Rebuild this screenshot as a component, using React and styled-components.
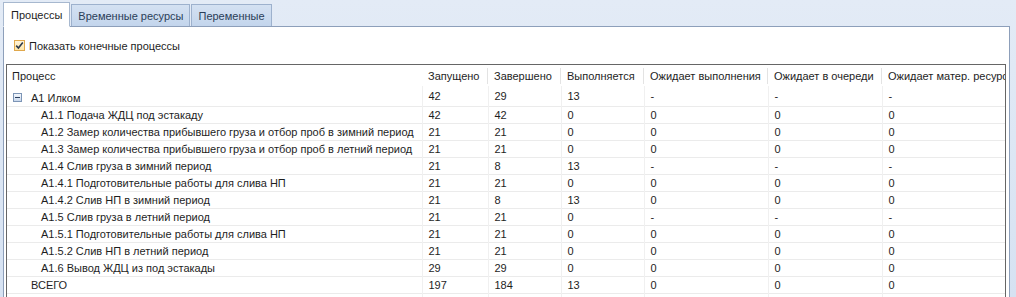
import React from "react";
import styled, { createGlobalStyle } from "styled-components";

const GlobalStyle = createGlobalStyle`
  html, body {
    margin: 0;
    padding: 0;
    background: #dbe6f4;
  }
  body {
    font-family: "Liberation Sans", Arial, sans-serif;
    font-size: 11px;
    color: #1e1e1e;
  }
`;

const Frame = styled.div`
  width: 1016px;
  height: 297px;
  overflow: hidden;
  background: linear-gradient(#e3ebf6, #d6e2f2);
  padding: 2px 6px 0 3px;
  box-sizing: border-box;
  display: flex;
  flex-direction: column;
`;

const TabStrip = styled.div`
  display: flex;
  align-items: flex-end;
  height: 24px;
  position: relative;
  z-index: 1;
`;

const Tab = styled.div`
  box-sizing: border-box;
  height: ${(p) => (p.$active ? "25px" : "22px")};
  padding: 0 ${(p) => (p.$active ? "7px" : "6px")};
  margin-right: 1px;
  display: flex;
  align-items: center;
  border: 1px solid ${(p) => (p.$active ? "#a7b8cf" : "#9db1cd")};
  border-bottom: ${(p) => (p.$active ? "1px solid #fff" : "none")};
  background: ${(p) =>
    p.$active ? "#fff" : "linear-gradient(#d4e1f2, #c3d5ec)"};
  color: ${(p) => (p.$active ? "#1e1e1e" : "#2a3d58")};
  margin-bottom: ${(p) => (p.$active ? "-1px" : "0")};
`;

const Panel = styled.div`
  flex: 1;
  background: #fff;
  border: 1px solid #8d9fba;
  border-bottom: none;
  padding: 0 3px 0 2px;
  display: flex;
  flex-direction: column;
  min-height: 0;
`;

const CheckRow = styled.label`
  display: flex;
  align-items: center;
  gap: 4px;
  height: 37px;
  padding-left: 8px;
`;

const Check = styled.span`
  width: 11px;
  height: 11px;
  box-sizing: border-box;
  border: 1px solid #e0a84c;
  background: linear-gradient(#fff4d8, #ffe6a8);
  display: flex;
  align-items: center;
  justify-content: center;
`;

const Grid = styled.div`
  flex: 1;
  border: 1px solid #666;
  border-bottom: none;
  overflow: hidden;
  min-height: 0;
`;

const Table = styled.table`
  border-collapse: collapse;
  table-layout: fixed;
  width: 1130px;
  font-size: 11px;
`;

const HeadCell = styled.th`
  font-weight: normal;
  text-align: left;
  height: 21px;
  padding: 0 0 0 ${(p) => (p.$first ? "5px" : "6px")};
  white-space: nowrap;
  overflow: hidden;
  position: relative;
  &::after {
    content: "";
    position: absolute;
    right: 0;
    top: 3px;
    bottom: 2px;
    width: 1px;
    background: ${(p) => (p.$first ? "transparent" : "#e3e3e3")};
  }
`;

const Row = styled.tr`
  height: 17px;
  border-top: ${(p) => (p.$first ? "none" : "1px solid #ebebeb")};
`;

const Cell = styled.td`
  padding: 0 0 0 6px;
  white-space: nowrap;
  overflow: hidden;
  border-left: 1px solid #f0f0f0;
  line-height: 16px;
`;

const NameCell = styled.td`
  padding: 0 0 0 ${(p) => p.$indent}px;
  white-space: nowrap;
  overflow: hidden;
  line-height: 16px;
`;

const NameWrap = styled.span`
  display: inline-flex;
  align-items: center;
`;

const Expander = styled.span`
  width: 9px;
  height: 9px;
  box-sizing: border-box;
  border: 1px solid #7d95b6;
  background: linear-gradient(#f4f8fd, #c9d8ec);
  margin: 0 9px 0 0;
  display: inline-flex;
  align-items: center;
  justify-content: center;
  &::before {
    content: "";
    width: 5px;
    height: 1px;
    background: #2b3f5e;
  }
`;

const columns = [
  "Процесс",
  "Запущено",
  "Завершено",
  "Выполняется",
  "Ожидает выполнения",
  "Ожидает в очереди",
  "Ожидает матер. ресурсы",
];
const widths = [415, 66, 73, 83, 124, 114, 255];

const rows = [
  { name: "А1 Илком", level: 0, group: true, v: [42, 29, 13, "-", "-", "-"] },
  { name: "А1.1 Подача ЖДЦ под эстакаду", level: 1, v: [42, 42, 0, 0, 0, 0] },
  {
    name: "А1.2 Замер количества прибывшего груза и отбор проб в зимний период",
    level: 1,
    v: [21, 21, 0, 0, 0, 0],
  },
  {
    name: "А1.3 Замер количества прибывшего груза и отбор проб в летний период",
    level: 1,
    v: [21, 21, 0, 0, 0, 0],
  },
  { name: "А1.4 Слив груза в зимний период", level: 1, v: [21, 8, 13, "-", "-", "-"] },
  { name: "А1.4.1 Подготовительные работы для слива НП", level: 1, v: [21, 21, 0, 0, 0, 0] },
  { name: "А1.4.2 Слив НП в зимний период", level: 1, v: [21, 8, 13, 0, 0, 0] },
  { name: "А1.5 Слив груза в летний период", level: 1, v: [21, 21, 0, "-", "-", "-"] },
  { name: "А1.5.1 Подготовительные работы для слива НП", level: 1, v: [21, 21, 0, 0, 0, 0] },
  { name: "А1.5.2 Слив НП в летний период", level: 1, v: [21, 21, 0, 0, 0, 0] },
  { name: "А1.6 Вывод ЖДЦ из под эстакады", level: 1, v: [29, 29, 0, 0, 0, 0] },
  { name: "ВСЕГО", level: 0, v: [197, 184, 13, 0, 0, 0] },
  { name: "", level: 0, v: ["", "", "", "", "", ""] },
];

export default function App() {
  return (
    <>
      <GlobalStyle />
      <Frame>
        <TabStrip>
          <Tab $active>Процессы</Tab>
          <Tab>Временные ресурсы</Tab>
          <Tab>Переменные</Tab>
        </TabStrip>
        <Panel>
          <CheckRow>
            <Check>
              <svg width="9" height="9" viewBox="0 0 9 9">
                <path
                  d="M1.2 4.6 L3.4 7 L7.8 1.4"
                  fill="none"
                  stroke="#2d3a4c"
                  strokeWidth="1.6"
                />
              </svg>
            </Check>
            Показать конечные процессы
          </CheckRow>
          <Grid>
            <Table>
              <colgroup>
                {widths.map((w, i) => (
                  <col key={i} style={{ width: w }} />
                ))}
              </colgroup>
              <thead>
                <tr>
                  {columns.map((c, i) => (
                    <HeadCell key={c} $first={i === 0}>
                      {c}
                    </HeadCell>
                  ))}
                </tr>
              </thead>
              <tbody>
                {rows.map((r, i) => (
                  <Row key={i} $first={i === 0}>
                    <NameCell $indent={r.group ? 6 : r.level ? 34 : 24}>
                      <NameWrap>
                        {r.group && <Expander />}
                        {r.name}
                      </NameWrap>
                    </NameCell>
                    {r.v.map((v, j) => (
                      <Cell key={j}>{v}</Cell>
                    ))}
                  </Row>
                ))}
              </tbody>
            </Table>
          </Grid>
        </Panel>
      </Frame>
    </>
  );
}
